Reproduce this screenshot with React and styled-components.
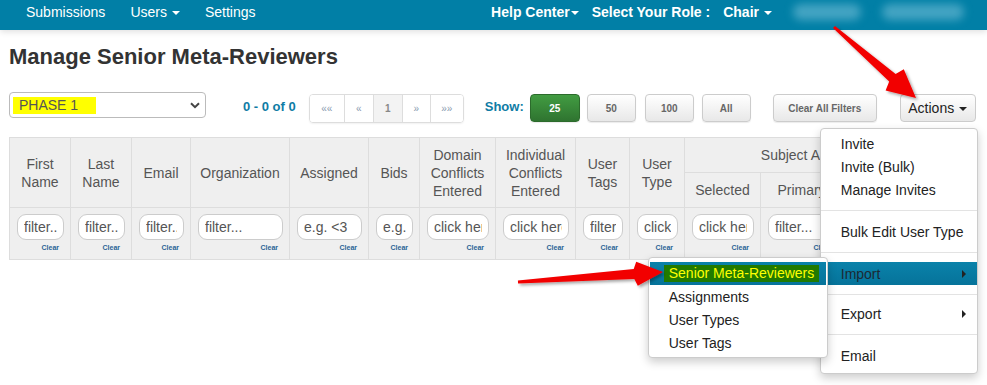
import React from "react";
import styled, { createGlobalStyle } from "styled-components";

const GlobalStyle = createGlobalStyle`
  body {
    margin: 0;
    font-family: "Liberation Sans", Arial, sans-serif;
    background: #fff;
  }
`;

const columns = [
  { w: 61, label: "First Name", ph: "filter..." },
  { w: 61, label: "Last Name", ph: "filter..." },
  { w: 59, label: "Email", ph: "filter..." },
  { w: 99, label: "Organization", ph: "filter..." },
  { w: 79, label: "Assigned", ph: "e.g. <3" },
  { w: 51, label: "Bids", ph: "e.g. <3" },
  { w: 76, label: "Domain Conflicts Entered", ph: "click here..." },
  { w: 80, label: "Individual Conflicts Entered", ph: "click here..." },
  { w: 54, label: "User Tags", ph: "filter..." },
  { w: 55, label: "User Type", ph: "click here" },
  { w: 76, label: "Selected", ph: "click here...", group: true },
  { w: 82, label: "Primary", ph: "filter...", group: true },
  { w: 81, label: "Secondary", ph: "filter...", group: true },
];

const sizes = [
  { label: "25", ml: 6, primary: true },
  { label: "50", ml: 7 },
  { label: "100", ml: 9 },
  { label: "All", ml: 8 },
];

const App = () => {
  const plain = columns.filter((c) => !c.group);
  const grouped = columns.filter((c) => c.group);

  return (
    <Page>
      <GlobalStyle />
      <Navbar>
        <NavLeft>
          <NavItem>Submissions</NavItem>
          <NavItem>
            Users <Caret $color="#fff" />
          </NavItem>
          <NavItem>Settings</NavItem>
        </NavLeft>
        <NavRight>
          <NavItem $bold>
            Help Center<Caret $color="#fff" $tight />
          </NavItem>
          <NavItem $bold>Select Your Role :</NavItem>
          <NavItem $bold>
            Chair <Caret $color="#fff" />
          </NavItem>
          <Blur $w={68} />
          <Blur $w={82} />
        </NavRight>
      </Navbar>

      <Main>
        <Title>Manage Senior Meta-Reviewers</Title>

        <Toolbar>
          <PhaseSelect>
            <Mark>PHASE 1</Mark>
            <svg width="10" height="7" viewBox="0 0 10 7">
              <path d="M1 1.2 L5 5.2 L9 1.2" fill="none" stroke="#444" strokeWidth="2" />
            </svg>
          </PhaseSelect>

          <Count>0 - 0 of 0</Count>

          <Pager>
            <PageCell $w={34}>««</PageCell>
            <PageCell $w={28}>«</PageCell>
            <PageCell $w={28} $active>1</PageCell>
            <PageCell $w={27}>»</PageCell>
            <PageCell $w={32}>»»</PageCell>
          </Pager>

          <ShowLabel>Show:</ShowLabel>
          {sizes.map((s) => (
            <SizeBtn key={s.label} $ml={s.ml} $primary={s.primary}>
              {s.label}
            </SizeBtn>
          ))}
          <ClearBtn>Clear All Filters</ClearBtn>

          <ActionsWrap>
            <ActionsBtn>
              Actions <Caret $color="#222" />
            </ActionsBtn>
            <Menu>
              <MenuItem>Invite</MenuItem>
              <MenuItem>Invite (Bulk)</MenuItem>
              <MenuItem>Manage Invites</MenuItem>
              <Divider />
              <MenuItem>Bulk Edit User Type</MenuItem>
              <Divider />
              <MenuItem $active>
                Import
                <SideCaret />
                <SubMenu>
                  <SubItem $active>
                    <SubMark>Senior Meta-Reviewers</SubMark>
                  </SubItem>
                  <SubItem>Assignments</SubItem>
                  <SubItem>User Types</SubItem>
                  <SubItem>User Tags</SubItem>
                </SubMenu>
              </MenuItem>
              <Divider $tight />
              <MenuItem>
                Export
                <SideCaret />
              </MenuItem>
              <Divider />
              <MenuItem>Email</MenuItem>
            </Menu>
          </ActionsWrap>
        </Toolbar>

        <Table>
          <colgroup>
            {columns.map((c) => (
              <Col key={c.label} $w={c.w} />
            ))}
          </colgroup>
          <thead>
            <tr>
              {plain.map((c) => (
                <Th key={c.label} rowSpan={2}>
                  {c.label}
                </Th>
              ))}
              <Th colSpan={3} $group>
                Subject Areas
              </Th>
            </tr>
            <tr>
              {grouped.map((c) => (
                <Th key={c.label} $sub>
                  {c.label}
                </Th>
              ))}
            </tr>
          </thead>
          <tbody>
            <tr>
              {columns.map((c) => (
                <FilterCell key={c.label}>
                  <FilterInput placeholder={c.ph} readOnly />
                  <ClearLink>Clear</ClearLink>
                </FilterCell>
              ))}
            </tr>
          </tbody>
        </Table>
      </Main>

      <ArrowLayer width="987" height="385" viewBox="0 0 987 385">
        <defs>
          <filter id="shade" x="-20%" y="-20%" width="140%" height="140%">
            <feDropShadow dx="2" dy="2" stdDeviation="1.5" floodColor="#000" floodOpacity="0.35" />
          </filter>
        </defs>
        <polygon
          filter="url(#shade)"
          fill="#f20000"
          points="835,25.9 895.6,74 903.8,69.2 916,98 885.6,90.4 889.2,81.6 833,28.1"
        />
        <polygon
          filter="url(#shade)"
          fill="#f20000"
          points="517.9,280.5 633.7,269 636.2,261.8 663,272 637.8,285.8 634.3,279 518.1,283.5"
        />
      </ArrowLayer>
    </Page>
  );
};

export default App;

const Page = styled.div`
  position: relative;
  width: 987px;
  height: 385px;
  overflow: hidden;
`;

const Navbar = styled.div`
  height: 30px;
  box-sizing: border-box;
  padding-bottom: 6px;
  background: #017fa6;
  display: flex;
  align-items: center;
  box-shadow: 0 2px 6px rgba(0, 0, 0, 0.12);
  color: #fff;
  font-size: 14px;
`;

const NavLeft = styled.div`
  display: flex;
  align-items: center;
  gap: 25px;
  padding-left: 26px;
`;

const NavRight = styled.div`
  display: flex;
  align-items: center;
  margin-left: auto;
  padding-right: 23px;
  gap: 13px;
`;

const NavItem = styled.div`
  display: flex;
  align-items: center;
  white-space: nowrap;
  font-weight: ${(p) => (p.$bold ? "bold" : "normal")};
`;

const Caret = styled.span`
  display: inline-block;
  width: 0;
  height: 0;
  margin-left: ${(p) => (p.$tight ? "1px" : "5px")};
  margin-top: 1px;
  border-top: 4px solid ${(p) => p.$color};
  border-left: 4px solid transparent;
  border-right: 4px solid transparent;
`;

const Blur = styled.div`
  width: ${(p) => p.$w}px;
  height: 16px;
  border-radius: 8px;
  background: rgba(150, 210, 230, 0.45);
  filter: blur(4px);
  margin-left: 8px;
`;

const Main = styled.div`
  padding: 0 9px;
`;

const Title = styled.h1`
  margin: 14px 0 0;
  font-size: 22px;
  line-height: 25px;
  font-weight: bold;
  color: #333;
`;

const Toolbar = styled.div`
  display: flex;
  align-items: flex-start;
  margin-top: 25px;
  height: 28px;
  white-space: nowrap;
  & > * {
    flex-shrink: 0;
  }
`;

const PhaseSelect = styled.div`
  box-sizing: border-box;
  width: 197px;
  height: 26px;
  margin-top: -2px;
  border: 1px solid #bbb;
  border-radius: 4px;
  display: flex;
  align-items: center;
  justify-content: space-between;
  padding: 0 5px 0 3px;
`;

const Mark = styled.span`
  background: #ffff00;
  color: #555;
  font-size: 14px;
  line-height: 17px;
  padding: 0 18px 0 6px;
`;

const Count = styled.div`
  margin-left: 37px;
  font-size: 13px;
  font-weight: bold;
  color: #0f7ca5;
  line-height: 26px;
`;

const Pager = styled.div`
  display: flex;
  margin-left: 13px;
  height: 27px;
  border: 1px solid #ddd;
  border-radius: 4px;
  box-shadow: 0 1px 2px rgba(0, 0, 0, 0.06);
  overflow: hidden;
`;

const PageCell = styled.div`
  width: ${(p) => p.$w}px;
  display: flex;
  align-items: center;
  justify-content: center;
  font-size: 10px;
  color: ${(p) => (p.$active ? "#888" : "#8a9bb0")};
  font-weight: ${(p) => (p.$active ? "bold" : "normal")};
  background: ${(p) => (p.$active ? "#f3f3f3" : "#fff")};
  & + & {
    border-left: 1px solid #ddd;
  }
`;

const ShowLabel = styled.div`
  margin-left: 21px;
  font-size: 13px;
  font-weight: bold;
  color: #0f7ca5;
  line-height: 26px;
`;

const SizeBtn = styled.div`
  box-sizing: border-box;
  width: ${(p) => (p.$primary ? 50 : 49)}px;
  height: 28px;
  margin-left: ${(p) => p.$ml ?? 8}px;
  border-radius: 4px;
  border: 1px solid ${(p) => (p.$primary ? "#2c6b2c" : "#ccc")};
  background: ${(p) =>
    p.$primary
      ? "linear-gradient(#429c42, #2f7430)"
      : "linear-gradient(#ffffff, #e8e8e8)"};
  color: ${(p) => (p.$primary ? "#fff" : "#666")};
  font-size: 10px;
  font-weight: bold;
  display: flex;
  align-items: center;
  justify-content: center;
  box-shadow: 0 1px 1px rgba(0, 0, 0, 0.08);
`;

const ClearBtn = styled(SizeBtn)`
  width: 104px;
  margin-left: 22px;
`;

const ActionsWrap = styled.div`
  position: relative;
  margin-left: 23px;
`;

const ActionsBtn = styled.div`
  box-sizing: border-box;
  width: 76px;
  height: 28px;
  border: 1px solid #ccc;
  border-radius: 4px;
  background: linear-gradient(#ffffff, #e8e8e8);
  font-size: 14px;
  color: #222;
  display: flex;
  align-items: center;
  justify-content: center;
`;

const Menu = styled.div`
  position: absolute;
  top: calc(100% + 6px);
  right: -2px;
  width: 158px;
  box-sizing: border-box;
  padding: 3px 0 6px;
  background: #fff;
  border: 1px solid #ccc;
  border-radius: 4px;
  box-shadow: 0 4px 10px rgba(0, 0, 0, 0.2);
  z-index: 5;
`;

const MenuItem = styled.div`
  position: relative;
  height: 23px;
  display: flex;
  align-items: center;
  justify-content: space-between;
  padding: 0 11px 0 20px;
  font-size: 14px;
  color: ${(p) => (p.$active ? "#1c2a33" : "#222")};
  background: ${(p) => (p.$active ? "linear-gradient(#0a82aa, #06739a)" : "transparent")};
  white-space: nowrap;
`;

const SideCaret = styled.span`
  width: 0;
  height: 0;
  border-left: 4px solid #222;
  border-top: 4px solid transparent;
  border-bottom: 4px solid transparent;
`;

const Divider = styled.div`
  height: 1px;
  margin: ${(p) => (p.$tight ? "9px 0 7px" : "9px 0")};
  background: #e3e3e3;
`;

const SubMenu = styled.div`
  position: absolute;
  top: -5px;
  right: calc(100% - 7px);
  width: 180px;
  box-sizing: border-box;
  padding: 4px 1px 3px;
  background: #fff;
  border: 1px solid #ccc;
  border-radius: 4px;
  box-shadow: 0 4px 10px rgba(0, 0, 0, 0.2);
  z-index: 6;
`;

const SubItem = styled.div`
  height: 23px;
  display: flex;
  align-items: center;
  padding-left: ${(p) => (p.$active ? 14 : 19)}px;
  font-size: 14px;
  color: #222;
  background: ${(p) => (p.$active ? "linear-gradient(#0a82aa, #06739a)" : "transparent")};
`;

const SubMark = styled.span`
  background: #217a00;
  color: #ffff00;
  padding: 0 5px;
  line-height: 17px;
`;

const Table = styled.table`
  margin-top: 15px;
  width: 914px;
  table-layout: fixed;
  border-collapse: collapse;
  background: #efefef;
  border: 1px solid #ddd;
`;

const Col = styled.col`
  width: ${(p) => p.$w}px;
`;

const Th = styled.th`
  height: ${(p) => (p.$group || p.$sub ? 34 : 69)}px;
  padding: 0 3px;
  border: 1px solid #ddd;
  font-size: 14px;
  line-height: 18px;
  font-weight: normal;
  color: #555;
  text-align: center;
  vertical-align: middle;
  white-space: ${(p) => (p.$group ? "nowrap" : "normal")};
  overflow: hidden;
`;

const FilterCell = styled.td`
  height: 52px;
  box-sizing: border-box;
  padding: 6px 6px 0 7px;
  border: 1px solid #ddd;
  vertical-align: top;
  overflow: hidden;
`;

const FilterInput = styled.input`
  display: block;
  box-sizing: border-box;
  width: 100%;
  height: 26px;
  padding: 0 6px;
  border: 1px solid #ccc;
  border-radius: 9px;
  background: #fff;
  font-family: "Liberation Sans", Arial, sans-serif;
  font-size: 14px;
  outline: none;
  &::placeholder {
    color: #555;
  }
`;

const ClearLink = styled.div`
  text-align: right;
  padding-right: 5px;
  margin-top: 4px;
  font-size: 7px;
  font-weight: bold;
  color: #2a6496;
`;

const ArrowLayer = styled.svg`
  position: absolute;
  left: 0;
  top: 0;
  pointer-events: none;
  z-index: 10;
`;
